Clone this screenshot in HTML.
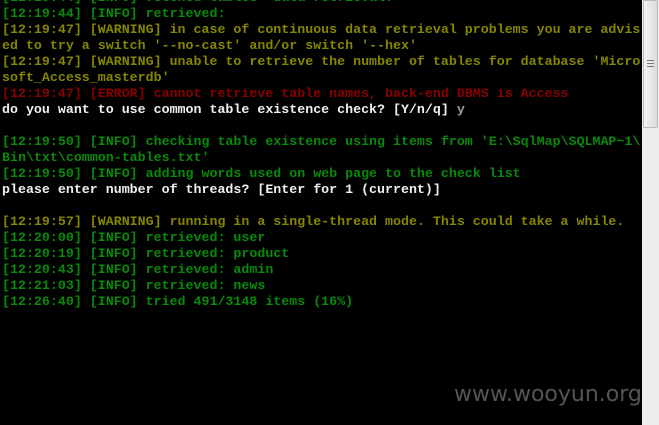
<!DOCTYPE html>
<html><head><style>
html,body{margin:0;padding:0;background:#000;width:659px;height:425px;overflow:hidden}
pre{position:absolute;left:2px;top:-10px;margin:0;font-family:"Liberation Mono",monospace;font-size:13.3px;line-height:16px;font-weight:bold;color:#c0c0c0;white-space:pre}
.g{color:#0a8a0a}.y{color:#868600}.r{color:#8a0000}.w{color:#f0f0f0}.l{color:#a0a0a0}
.sb{position:absolute;left:642px;top:0;width:17px;height:425px;background:#eeeeee}
.th{position:absolute;left:643px;top:0;width:15px;height:128px;background:linear-gradient(90deg,#f4f4f4,#dcdcdc);border:1px solid #b8b8b8;box-sizing:border-box;border-radius:2px}
.th i{position:absolute;left:3px;width:7px;height:1px;background:#777}
.wm{position:absolute;left:454px;top:382px;font-family:"DejaVu Sans","Liberation Sans",sans-serif;font-size:22px;color:#555}
</style></head><body>
<pre><span class="g">[12:19:44] [INFO] fetched tables' data retrieval:</span>
<span class="g">[12:19:44] [INFO] retrieved:</span>
<span class="y">[12:19:47] [WARNING] in case of continuous data retrieval problems you are advis
ed to try a switch '--no-cast' and/or switch '--hex'
[12:19:47] [WARNING] unable to retrieve the number of tables for database 'Micro
soft_Access_masterdb'</span>
<span class="r">[12:19:47] [ERROR] cannot retrieve table names, back-end DBMS is Access</span>
<span class="w">do you want to use common table existence check? [Y/n/q] </span><span class="l">y</span>

<span class="g">[12:19:50] [INFO] checking table existence using items from 'E:\SqlMap\SQLMAP~1\
Bin\txt\common-tables.txt'
[12:19:50] [INFO] adding words used on web page to the check list</span>
<span class="w">please enter number of threads? [Enter for 1 (current)]</span>

<span class="y">[12:19:57] [WARNING] running in a single-thread mode. This could take a while.</span>
<span class="g">[12:20:00] [INFO] retrieved: user
[12:20:19] [INFO] retrieved: product
[12:20:43] [INFO] retrieved: admin
[12:21:03] [INFO] retrieved: news
[12:26:40] [INFO] tried 491/3148 items (16%)</span></pre>
<div class="sb"></div>
<div class="th"><i style="top:59px"></i><i style="top:62px"></i><i style="top:65px"></i></div>
<div class="wm">www.wooyun.org</div>
</body></html>
